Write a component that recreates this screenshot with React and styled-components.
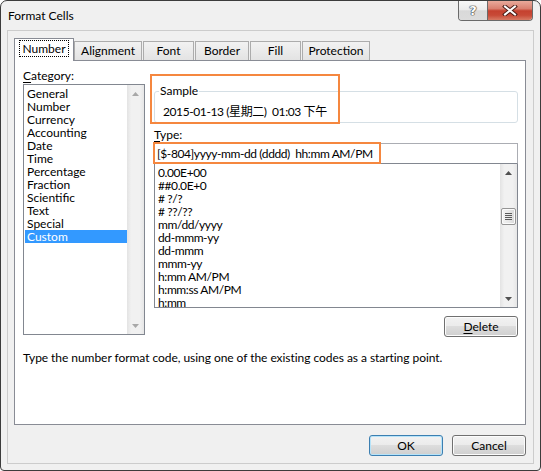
import React from "react";
import styled, { createGlobalStyle } from "styled-components";

const GlobalStyle = createGlobalStyle`
  html, body {
    margin: 0;
    padding: 0;
    background: #ffffff;
  }
  body {
    font-family: "Segoe UI", Lato, "Noto Sans CJK SC", sans-serif;
    font-size: 12px;
    color: #000;
  }
`;

const Window = styled.div`
  box-sizing: border-box;
  width: 541px;
  height: 471px;
  border: 1px solid #3c3c3c;
  border-radius: 7px 7px 4px 4px;
  background: #f0f0f0;
  padding: 0 6px 6px;
  display: flex;
  flex-direction: column;
  overflow: hidden;
`;

const TitleBar = styled.div`
  height: 29px;
  display: flex;
  justify-content: space-between;
  align-items: flex-start;
`;

const Title = styled.div`
  padding: 7px 0 0 1px;
  line-height: 16px;
  font-size: 12px;
`;

const CaptionGroup = styled.div`
  display: flex;
  margin-right: 1px;
  border: 1px solid #6a6a6a;
  border-top: none;
  border-radius: 0 0 4px 4px;
  overflow: hidden;
`;

const CaptionButton = styled.div`
  width: ${(p) => p.$w}px;
  height: 19px;
  display: flex;
  align-items: center;
  justify-content: center;
  box-sizing: border-box;
  background: ${(p) =>
    p.$close
      ? "linear-gradient(#e9aa9b 0%, #d98070 40%, #c5412f 52%, #c84a37 75%, #d77a64 100%)"
      : "linear-gradient(#f8f8f8 0%, #ececec 45%, #d9d9d9 52%, #dcdcdc 100%)"};
  border-right: ${(p) => (p.$close ? "none" : "1px solid #6a6a6a")};
`;

const HelpGlyph = styled.span`
  font-family: "DejaVu Sans", sans-serif;
  font-weight: bold;
  font-size: 13px;
  line-height: 13px;
  color: #ffffff;
  text-shadow: 0 0 1px #444, 0 0 1px #444, 0 0 1px #444, 0 0 1px #444;
`;

const Client = styled.div`
  flex: 1;
  border: 1px solid #cccccc;
  padding: 7px 7px 0 6px;
  display: flex;
  flex-direction: column;
`;

const TabRow = styled.div`
  height: 22px;
  display: flex;
  align-items: flex-end;
`;

const Tab = styled.div`
  position: relative;
  box-sizing: border-box;
  width: ${(p) => p.$w}px;
  height: ${(p) => (p.$active ? 23 : 19)}px;
  margin-bottom: ${(p) => (p.$active ? -1 : 0)}px;
  margin-right: ${(p) => (p.$active ? 0 : 1)}px;
  z-index: ${(p) => (p.$active ? 1 : 0)};
  border: 1px solid ${(p) => (p.$active ? "#898c95" : "#acacac")};
  border-bottom: none;
  background: ${(p) =>
    p.$active ? "#ffffff" : "linear-gradient(#f2f2f2, #e3e3e3)"};
  display: flex;
  justify-content: center;
  padding-top: ${(p) => (p.$active ? 2 : 1)}px;
  line-height: 15px;
`;

const FocusBox = styled.span`
  outline: 1px dotted #000;
  outline-offset: 0;
  padding: 0 2px;
  height: 15px;
`;

const Panel = styled.div`
  box-sizing: border-box;
  height: 365px;
  border: 1px solid #898c95;
  background: #ffffff;
  padding: 7px 7px 0 8px;
  display: flex;
  flex-direction: column;
`;

const TopRow = styled.div`
  display: flex;
  gap: 9px;
`;

const LeftCol = styled.div`
  width: 122px;
  display: flex;
  flex-direction: column;
`;

const RightCol = styled.div`
  position: relative;
  flex: 1;
  display: flex;
  flex-direction: column;
`;

const FieldLabel = styled.div`
  line-height: 16px;
  height: 16px;
  margin-top: ${(p) => p.$mt || 0}px;
  u {
    text-decoration: underline;
    text-underline-offset: 2px;
  }
`;

const ListBox = styled.div`
  box-sizing: border-box;
  height: ${(p) => p.$h}px;
  border: 1px solid #828790;
  border-top: ${(p) => (p.$noTop ? "none" : "1px solid #828790")};
  display: flex;
  overflow: hidden;
`;

const Items = styled.div`
  flex: 1;
  padding: 2px 0 0 1px;
  overflow: hidden;
`;

const Item = styled.div`
  height: 13px;
  line-height: 13px;
  padding-left: ${(p) => p.$pl}px;
  letter-spacing: ${(p) => (p.$tight ? "-0.4px" : "0")};
  white-space: pre;
  background: ${(p) => (p.$selected ? "#3399ff" : "transparent")};
  color: ${(p) => (p.$selected ? "#ffffff" : "#000000")};
`;

const ScrollBar = styled.div`
  width: 17px;
  display: flex;
  flex-direction: column;
  background: linear-gradient(to right, #e3e3e3, #f1f1f1 25%, #f1f1f1 75%, #e6e6e6);
`;

const ArrowBox = styled.div`
  height: 17px;
  display: flex;
  align-items: center;
  justify-content: center;
`;

const Track = styled.div`
  flex: 1;
  display: flex;
  flex-direction: column;
  align-items: center;
`;

const Thumb = styled.div`
  box-sizing: border-box;
  width: 15px;
  height: 17px;
  margin-top: ${(p) => p.$offset}px;
  border: 1px solid #959595;
  border-radius: 2px;
  background: linear-gradient(to right, #f3f3f3, #e8e8e8 50%, #d9d9d9);
  box-shadow: inset 0 0 0 1px #fbfbfb;
  display: flex;
  flex-direction: column;
  align-items: center;
  justify-content: center;
  gap: 1px;
`;

const Grip = styled.div`
  width: 7px;
  height: 1px;
  background: #5a5a5a;
`;

const SampleGroup = styled.fieldset`
  margin: 15px 0 0;
  padding: 0 0 2px 6px;
  min-width: 0;
  border: 1px solid #d5dfe5;
  border-radius: 3px;
`;

const Legend = styled.legend`
  padding: 0 1px;
  margin-left: -2px;
  line-height: 16px;
  font-size: 12px;
`;

const SampleValue = styled.div`
  margin-top: 5px;
  padding-left: 2px;
  line-height: 16px;
  letter-spacing: -0.4px;
  white-space: pre;
`;

const TextInput = styled.div`
  box-sizing: border-box;
  height: 21px;
  border: 1px solid #abadb3;
  border-bottom: 1px solid #828790;
  padding-left: 2px;
  line-height: 19px;
  letter-spacing: -0.4px;
  white-space: pre;
`;

const Highlight = styled.div`
  position: absolute;
  left: ${(p) => p.$x}px;
  top: ${(p) => p.$y}px;
  width: ${(p) => p.$w}px;
  height: ${(p) => p.$h}px;
  box-sizing: border-box;
  border: 2px solid #f5873f;
  pointer-events: none;
`;

const Button = styled.div`
  box-sizing: border-box;
  width: 74px;
  height: 21px;
  border: 1px solid ${(p) => (p.$default ? "#3c7fb1" : "#707070")};
  border-radius: 3px;
  background: linear-gradient(#f2f2f2 0%, #ebebeb 50%, #dddddd 50%, #cfcfcf 100%);
  box-shadow: inset 0 0 0 1px ${(p) => (p.$default ? "#b6e3f9" : "#fcfcfc")};
  display: flex;
  align-items: center;
  justify-content: center;
  line-height: 15px;
  align-self: ${(p) => (p.$end ? "flex-end" : "auto")};
  margin-top: ${(p) => p.$mt || 0}px;
  u {
    text-decoration: underline;
    text-underline-offset: 2px;
  }
`;

const Description = styled.div`
  margin-top: 13px;
  line-height: 16px;
  letter-spacing: -0.05px;
`;

const ButtonRow = styled.div`
  margin-top: 10px;
  display: flex;
  justify-content: flex-end;
  gap: 9px;
`;

const Arrow = ({ up, color }) => (
  <svg width="7" height="4" viewBox="0 0 7 4">
    <path d={up ? "M0 4 L3.5 0 L7 4 Z" : "M0 0 L3.5 4 L7 0 Z"} fill={color} />
  </svg>
);

const CloseIcon = () => (
  <svg width="16" height="11" viewBox="0 0 16 11">
    <path d="M3 1.5 L13 9.5 M13 1.5 L3 9.5" stroke="#4a1c16" strokeWidth="4" strokeLinecap="square" />
    <path d="M3 1.5 L13 9.5 M13 1.5 L3 9.5" stroke="#ffffff" strokeWidth="2" strokeLinecap="square" />
  </svg>
);

const tabs = [
  { label: "Number", w: 60, active: true },
  { label: "Alignment", w: 68 },
  { label: "Font", w: 51 },
  { label: "Border", w: 54 },
  { label: "Fill", w: 51 },
  { label: "Protection", w: 68 },
];

const categories = [
  "General",
  "Number",
  "Currency",
  "Accounting",
  "Date",
  "Time",
  "Percentage",
  "Fraction",
  "Scientific",
  "Text",
  "Special",
  "Custom",
];

const formats = [
  "0.00E+00",
  "##0.0E+0",
  "# ?/?",
  "# ??/??",
  "mm/dd/yyyy",
  "dd-mmm-yy",
  "dd-mmm",
  "mmm-yy",
  "h:mm AM/PM",
  "h:mm:ss AM/PM",
  "h:mm",
];

export default function App() {
  return (
    <>
      <GlobalStyle />
      <Window>
        <TitleBar>
          <Title>Format Cells</Title>
          <CaptionGroup>
            <CaptionButton $w={29}>
              <HelpGlyph>?</HelpGlyph>
            </CaptionButton>
            <CaptionButton $w={44} $close>
              <CloseIcon />
            </CaptionButton>
          </CaptionGroup>
        </TitleBar>
        <Client>
          <TabRow>
            {tabs.map((t) => (
              <Tab key={t.label} $w={t.w} $active={t.active}>
                {t.active ? <FocusBox>{t.label}</FocusBox> : t.label}
              </Tab>
            ))}
          </TabRow>
          <Panel>
            <TopRow>
              <LeftCol>
                <FieldLabel>
                  <u>C</u>ategory:
                </FieldLabel>
                <ListBox $h={251}>
                  <Items>
                    {categories.map((c) => (
                      <Item key={c} $pl={2} $selected={c === "Custom"}>
                        {c}
                      </Item>
                    ))}
                  </Items>
                  <ScrollBar>
                    <ArrowBox>
                      <Arrow up color="#a8a8a8" />
                    </ArrowBox>
                    <Track />
                    <ArrowBox>
                      <Arrow color="#a8a8a8" />
                    </ArrowBox>
                  </ScrollBar>
                </ListBox>
              </LeftCol>
              <RightCol>
                <SampleGroup>
                  <Legend>Sample</Legend>
                  <SampleValue>2015-01-13 (星期二)  01:03 下午</SampleValue>
                </SampleGroup>
                <FieldLabel $mt={4}>
                  <u>T</u>ype:
                </FieldLabel>
                <TextInput>[$-804]yyyy-mm-dd (dddd)  hh:mm AM/PM</TextInput>
                <ListBox $h={144} $noTop>
                  <Items>
                    {formats.map((f) => (
                      <Item key={f} $pl={2} $tight>
                        {f}
                      </Item>
                    ))}
                  </Items>
                  <ScrollBar>
                    <ArrowBox>
                      <Arrow up color="#505050" />
                    </ArrowBox>
                    <Track>
                      <Thumb $offset={27}>
                        <Grip />
                        <Grip />
                        <Grip />
                        <Grip />
                      </Thumb>
                    </Track>
                    <ArrowBox>
                      <Arrow color="#505050" />
                    </ArrowBox>
                  </ScrollBar>
                </ListBox>
                <Button $end $mt={8}>
                  <span>
                    <u>D</u>elete
                  </span>
                </Button>
                <Highlight $x={-4} $y={6} $w={190} $h={50} />
                <Highlight $x={-1} $y={74} $w={228} $h={22} />
              </RightCol>
            </TopRow>
            <Description>
              Type the number format code, using one of the existing codes as a starting point.
            </Description>
          </Panel>
          <ButtonRow>
            <Button $default>OK</Button>
            <Button>Cancel</Button>
          </ButtonRow>
        </Client>
      </Window>
    </>
  );
}
